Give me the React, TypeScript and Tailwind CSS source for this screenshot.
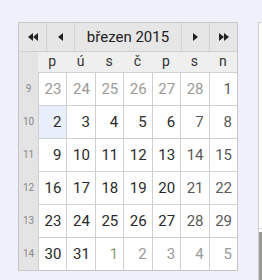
import React from "react";

type Day = { n: number; cls: string; hl?: boolean };

const weeks: { wk: number; days: Day[] }[] = (() => {
  const out: { wk: number; days: Day[] }[] = [];
  const nums = [
    [23, 24, 25, 26, 27, 28, 1],
    [2, 3, 4, 5, 6, 7, 8],
    [9, 10, 11, 12, 13, 14, 15],
    [16, 17, 18, 19, 20, 21, 22],
    [23, 24, 25, 26, 27, 28, 29],
    [30, 31, 1, 2, 3, 4, 5],
  ];
  nums.forEach((row, r) => {
    out.push({
      wk: 9 + r,
      days: row.map((n, c) => {
        const other = (r === 0 && c < 6) || (r === 5 && c > 1);
        const weekend = c >= 5;
        let cls = "text-[#2a2a2a]";
        if (other) cls = "text-[#9a9a9a]";
        else if (weekend) cls = "text-[#5a5a5a]";
        if (r === 5 && c === 2) cls = "text-[#8a9a7a]";
        return { n, cls, hl: r === 1 && c === 0 };
      }),
    });
  });
  return out;
})();

function Tri({ dir, double }: { dir: "l" | "r"; double?: boolean }) {
  const one = dir === "l" ? "M5 0 L0 4 L5 8 Z" : "M0 0 L5 4 L0 8 Z";
  const two = dir === "l" ? "M10 0 L5 4 L10 8 Z" : "M5 0 L10 4 L5 8 Z";
  return (
    <svg width={double ? 10 : 5} height="8" viewBox={`0 0 ${double ? 10 : 5} 8`} fill="#222">
      <path d={one} />
      {double && <path d={two} />}
    </svg>
  );
}

export default function App() {
  return (
    <div
      className="flex h-[280px] w-[262px] overflow-hidden bg-[#eef0fb] pt-[22px] pl-[18px]"
      style={{ fontFamily: '"Liberation Sans Narrow", Roboto, sans-serif' }}
    >
      <div className="w-[220px] shrink-0 self-start border border-[#c6c6c6] bg-white">
        <div className="grid h-[29px] grid-cols-[27px_28px_107px_28px_1fr] border-b border-[#d0d0d0] bg-[#e6e6e6]">
          <div className="flex items-center justify-center">
            <Tri dir="l" double />
          </div>
          <div className="flex items-center justify-center border-l border-[#d2d2d2]">
            <Tri dir="l" />
          </div>
          <div className="flex items-center justify-center border-l border-[#d2d2d2] text-[15px] text-[#222]">
            březen 2015
          </div>
          <div className="flex items-center justify-center border-l border-[#d2d2d2]">
            <Tri dir="r" />
          </div>
          <div className="flex items-center justify-center border-l border-[#d2d2d2]">
            <Tri dir="r" double />
          </div>
        </div>
        <div className="grid h-[20px] grid-cols-[19px_repeat(7,1fr)] bg-[#efefef] text-[14px] leading-[18px] text-[#333]">
          <div className="bg-[#e4e4e4]" />
          {["p", "ú", "s", "č", "p", "s", "n"].map((d, i) => (
            <div key={i} className="text-center">
              {d}
            </div>
          ))}
        </div>
        {weeks.map((w) => (
          <div key={w.wk} className="grid h-[33px] grid-cols-[19px_repeat(7,1fr)]">
            <div className="flex items-center justify-center bg-[#e4e4e4] text-[10px] text-[#888]">
              {w.wk}
            </div>
            {w.days.map((d, i) => (
              <div
                key={i}
                className={`flex items-center justify-end border-t border-l border-[#d0d0d0] pr-[5px] text-[15px] ${d.cls} ${d.hl ? "bg-[#e9eefb]" : ""}`}
              >
                {d.n}
              </div>
            ))}
          </div>
        ))}
      </div>
      <div className="ml-[20px] flex h-[258px] w-[10px] shrink-0 flex-col border-l border-t border-[#cfcfcf] bg-white">
        <div className="h-[206px] border-b border-[#d6d6d6]" />
        <div className="mt-[3px] flex-1 bg-[#9a9a9a]" />
      </div>
    </div>
  );
}
